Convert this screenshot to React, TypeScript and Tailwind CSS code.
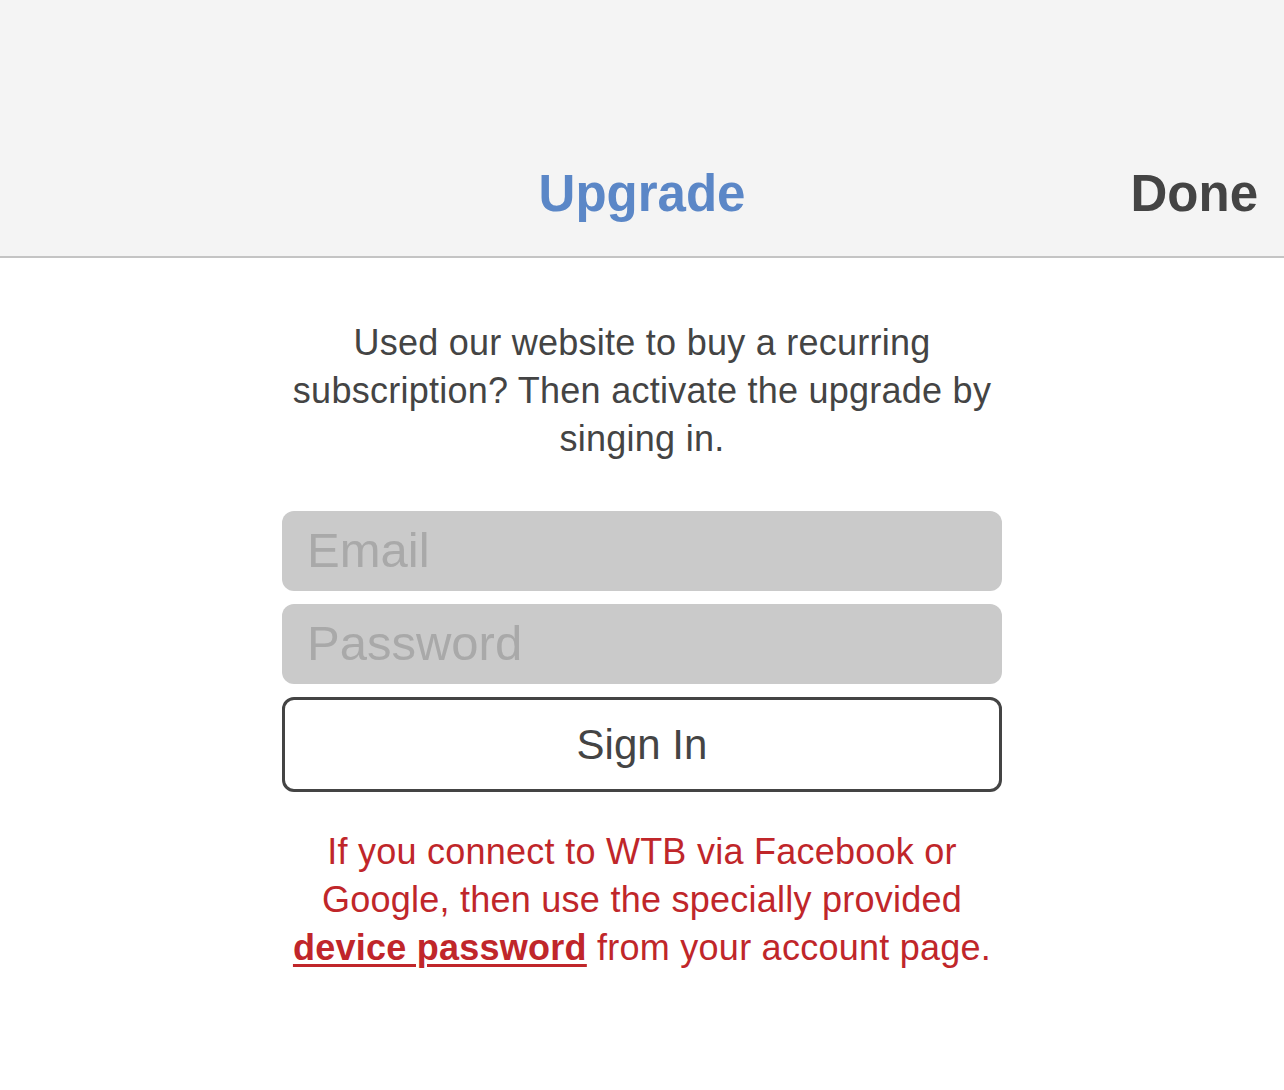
import React from "react";

export default function App() {
  return (
    <div className="min-h-[1090px] w-full bg-white" style={{ fontFamily: '"Liberation Sans", Arial, sans-serif' }}>
      <div className="relative h-[258px] bg-[#f4f4f4] border-b-2 border-[#c4c4c4]">
        <div className="absolute left-0 right-0 top-[160px] text-center text-[51px] font-bold text-[#5b87c7] leading-[68px]">
          Upgrade
        </div>
        <div className="absolute right-[26px] top-[160px] text-[51px] font-bold text-[#444444] leading-[68px]">
          Done
        </div>
      </div>
      <div className="flex flex-col items-center pt-[61px]">
        <p className="w-[760px] text-center text-[36px] leading-[48px] tracking-[0.25px] text-[#444444]">
          Used our website to buy a recurring
          <br />
          subscription? Then activate the upgrade by
          <br />
          singing in.
        </p>
        <div className="mt-[48px] flex w-[720px] flex-col gap-[13px]">
          <div className="flex h-[80px] items-center rounded-[12px] bg-[#cacaca] px-[25px] text-[49px] text-[#a9a9a9]">
            Email
          </div>
          <div className="flex h-[80px] items-center rounded-[12px] bg-[#cacaca] px-[25px] text-[49px] text-[#a9a9a9]">
            Password
          </div>
          <div className="flex h-[95px] items-center justify-center rounded-[12px] border-[3px] border-[#444444] text-[42px] text-[#444444]">
            Sign In
          </div>
        </div>
        <p className="mt-[36px] w-[760px] text-center text-[36px] leading-[48px] tracking-[0.25px] text-[#c0262a]">
          If you connect to WTB via Facebook or
          <br />
          Google, then use the specially provided
          <br />
          <span className="font-bold underline underline-offset-[4px] decoration-[3px]">device password</span> from your account page.
        </p>
      </div>
    </div>
  );
}
